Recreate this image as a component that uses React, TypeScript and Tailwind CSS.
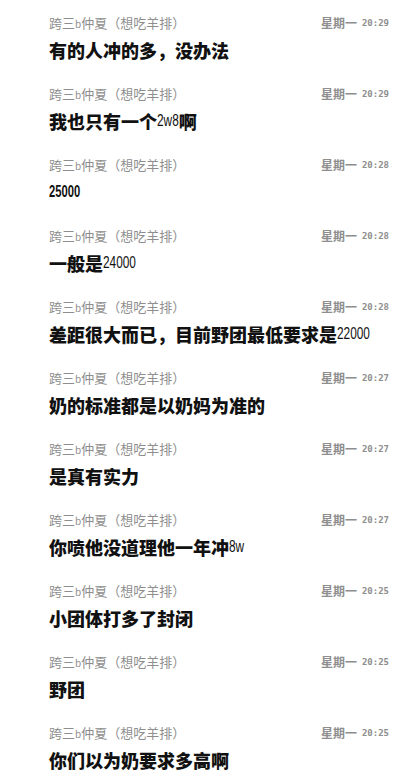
import React from "react";

type Msg = { time: string; parts: (string | { n: string })[] };

const msgs: Msg[] = [
  { time: "20:29", parts: ["有的人冲的多，没办法"] },
  { time: "20:29", parts: ["我也只有一个", { n: "2w8" }, "啊"] },
  { time: "20:28", parts: [{ n: "25000" }] },
  { time: "20:28", parts: ["一般是", { n: "24000" }] },
  { time: "20:28", parts: ["差距很大而已，目前野团最低要求是", { n: "22000" }] },
  { time: "20:27", parts: ["奶的标准都是以奶妈为准的"] },
  { time: "20:27", parts: ["是真有实力"] },
  { time: "20:27", parts: ["你喷他没道理他一年冲", { n: "8w" }] },
  { time: "20:25", parts: ["小团体打多了封闭"] },
  { time: "20:25", parts: ["野团"] },
  { time: "20:25", parts: ["你们以为奶要求多高啊"] },
];

const cjk = { fontFamily: '"Noto Sans CJK SC", "Noto Sans", sans-serif' };

function Num({ text, solo }: { text: string; solo: boolean }) {
  const size = solo ? 17 : 16;
  const scale = solo ? 0.66 : 0.74;
  const w = text.split("").reduce((a, c) => a + (c === "w" ? 0.722 : 0.556), 0) * size;
  return (
    <span
      className={(solo ? "font-bold " : "font-normal ") + "inline-block origin-left"}
      style={{
        fontFamily: '"Liberation Sans", Arial, sans-serif',
        fontSize: size,
        transform: `scaleX(${scale})`,
        marginRight: -w * (1 - scale),
      }}
    >
      {text}
    </span>
  );
}

export default function App() {
  return (
    <div className="w-[405px] h-[773px] overflow-hidden bg-white flex flex-col" style={cjk}>
      {msgs.map((m, i) => (
        <div key={i} className="h-[71px] shrink-0 pt-[14px] pl-[49px] pr-[16px] flex flex-col gap-[5px]">
          <div className="h-[18px] flex items-center justify-between">
            <span className="text-[13px] leading-[18px] text-[#8e8e8e]">
              跨三<span className="text-[10px]">b</span>仲夏（想吃羊排）
            </span>
            <span className="flex items-center gap-[5px] text-[#8e8e8e]">
              <span className="text-[12px] font-bold leading-[18px]">星期一</span>
              <span
                className="text-[9px] font-bold leading-[18px]"
                style={{ fontFamily: '"DejaVu Sans Mono", "Liberation Mono", monospace' }}
              >
                {m.time}
              </span>
            </span>
          </div>
          <div className="h-[26px] flex items-center text-[18px] leading-[26px] font-black text-[#111111]">
            {m.parts.map((p, j) =>
              typeof p === "string" ? (
                <span key={j}>{p}</span>
              ) : (
                <Num key={j} text={p.n} solo={m.parts.length === 1} />
              )
            )}
          </div>
        </div>
      ))}
    </div>
  );
}
